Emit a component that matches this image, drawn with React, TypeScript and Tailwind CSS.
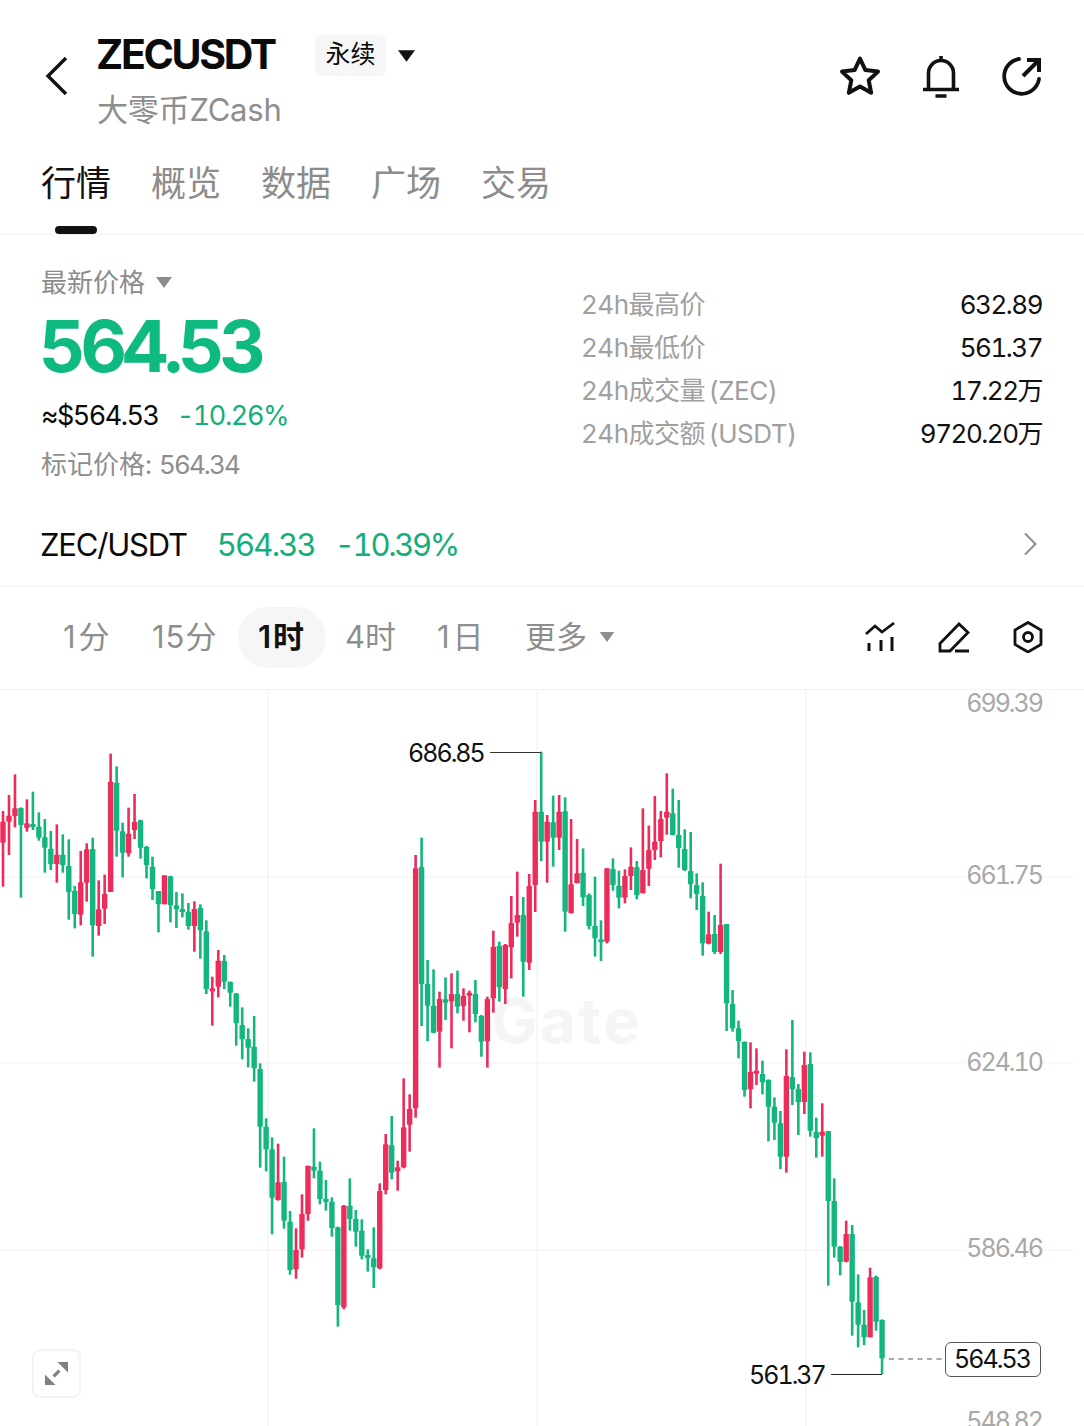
import React from "react";

type Raw = [string, number, number, number, number];

const GREEN = "#12b67e";
const RED = "#ee2c5c";

// values read at 3x, y0 is the top of each crop
const groups: { y0: number; rows: Raw[] }[] = [
  {
    y0: 740,
    rows: [
      ["R", 213, 245, 308, 440], ["R", 165, 227, 245, 345], ["R", 103, 205, 228, 262], ["G", 202, 204, 255, 473],
      ["R", 178, 250, 264, 275], ["G", 155, 252, 258, 270], ["G", 217, 260, 293, 302], ["G", 237, 292, 323, 398],
      ["G", 273, 326, 373, 390], ["R", 253, 344, 372, 428], ["G", 283, 344, 375, 398], ["G", 298, 378, 456, 539],
      ["G", 438, 452, 522, 565], ["R", 333, 427, 524, 556], ["R", 310, 328, 428, 485], ["G", 293, 327, 556, 650],
      ["R", 421, 508, 558, 587], ["R", 404, 462, 506, 552], ["R", 41, 125, 456, 456], ["G", 79, 128, 272, 350],
      ["G", 248, 274, 338, 412], ["R", 203, 281, 340, 350], ["R", 162, 246, 270, 297], ["G", 239, 241, 323, 356],
      ["G", 318, 320, 375, 415], ["G", 350, 380, 447, 480], ["G", 453, 453, 493, 577], ["R", 406, 406, 493, 493],
      ["G", 407, 409, 495, 547], ["G", 456, 496, 508, 564], ["G", 460, 507, 516, 532], ["G", 489, 515, 558, 569],
      ["R", 484, 507, 558, 635], ["G", 493, 504, 571, 656], ["G", 541, 574, 747, 762],
    ],
  },
  {
    y0: 960,
    rows: [
      ["R", 50, 85, 89, 197], ["R", -30, 2, 80, 112], ["G", -15, 3, 65, 87], ["G", 65, 65, 98, 140],
      ["G", 100, 100, 190, 257], ["G", 142, 195, 238, 298], ["G", 205, 237, 263, 322], ["G", 168, 260, 325, 365],
      ["G", 310, 327, 500, 623], ["G", 475, 500, 568, 634], ["G", 532, 568, 713, 823], ["R", 551, 667, 720, 722],
      ["G", 590, 666, 782, 806], ["G", 753, 785, 930, 944], ["R", 805, 870, 928, 956], ["R", 703, 762, 868, 893],
      ["R", 617, 617, 762, 782], ["G", 505, 620, 632, 655], ["G", 605, 632, 717, 733], ["G", 660, 716, 726, 752],
      ["G", 712, 725, 804, 830], ["G", 800, 802, 1035, 1100], ["R", 735, 737, 1042, 1048], ["G", 655, 737, 777, 812],
      ["G", 750, 777, 815, 860], ["G", 778, 812, 887, 898], ["G", 868, 885, 894, 935], ["G", 802, 895, 922, 984],
      ["R", 670, 693, 925, 928], ["R", 522, 553, 690, 703], ["G", 468, 556, 638, 658], ["R", 602, 622, 634, 692],
      ["R", 355, 502, 622, 625], ["R", 403, 447, 494, 575], ["R", -315, -275, 445, 473], ["G", -367, -279, 72, 198],
      ["G", 0, 72, 137, 243], ["G", 28, 137, 218, 220], ["R", 95, 117, 215, 323], ["G", 52, 118, 128, 180],
      ["R", 40, 102, 124, 265], ["G", 32, 102, 140, 160], ["R", 85, 108, 138, 182], ["R", 92, 98, 106, 217],
      ["G", 60, 102, 162, 187], ["G", 165, 167, 245, 290], ["R", 110, 117, 244, 323],
    ],
  },
  {
    y0: 930,
    rows: [
      ["R", 2, 50, 205, 248], ["G", 35, 48, 172, 215], ["R", 42, 45, 177, 222], ["R", -102, -21, 52, 145],
      ["R", -175, -45, -22, 20], ["G", -99, -45, 95, 200], ["R", -168, -132, 98, 120], ["R", -390, -355, -135, -54],
    ],
  },
  {
    y0: 740,
    rows: [
      ["G", 35, 215, 305, 363], ["R", 225, 245, 305, 428], ["G", 167, 247, 293, 380], ["R", 165, 215, 293, 330],
      ["G", 172, 214, 515, 575], ["R", 237, 433, 520, 520], ["R", 297, 400, 430, 430], ["G", 325, 398, 472, 498],
      ["G", 460, 465, 558, 568], ["G", 410, 558, 595, 650], ["G", 541, 598, 605, 663], ["R", 385, 385, 605, 610],
      ["G", 355, 387, 435, 452], ["G", 392, 437, 473, 505], ["R", 388, 408, 473, 490], ["R", 322, 380, 408, 450],
      ["G", 363, 382, 465, 478], ["R", 205, 390, 460, 460], ["R", 257, 330, 386, 438], ["R", 168, 305, 330, 360],
      ["R", 213, 237, 303, 352], ["R", 100, 215, 233, 284], ["G", 146, 220, 285, 286], ["G", 180, 285, 325, 383],
      ["G", 268, 327, 390, 393], ["G", 276, 393, 433, 475], ["G", 400, 435, 462, 510], ["G", 427, 467, 610, 647],
      ["R", 515, 583, 611, 613], ["G", 525, 582, 636, 642], ["R", 371, 555, 636, 642],
    ],
  },
  {
    y0: 960,
    rows: [["G", -108, -108, 130, 213], ["G", 90, 132, 205, 215]],
  },
  {
    y0: 1000,
    rows: [
      ["G", 62, 85, 123, 175], ["G", 125, 125, 270, 290], ["R", 127, 215, 268, 325], ["R", 145, 212, 218, 255],
      ["G", 182, 222, 247, 283], ["G", 238, 240, 320, 424], ["G", 292, 320, 368, 420], ["G", 333, 370, 470, 507],
      ["R", 148, 228, 470, 518], ["G", 60, 232, 268, 315], ["G", 252, 267, 306, 405], ["R", 155, 195, 306, 342],
      ["G", 157, 192, 392, 410], ["G", 353, 396, 414, 473], ["R", 310, 395, 407, 470], ["G", 393, 393, 603, 857],
      ["G", 535, 603, 740, 773], ["G", 738, 740, 786, 826], ["R", 662, 702, 785, 787], ["G", 675, 702, 905, 1007],
      ["G", 823, 907, 974, 1042], ["G", 930, 974, 1012, 1035], ["R", 803, 832, 1012, 1012], ["G", 827, 830, 965, 992],
      ["G", 958, 960, 1075, 1122],
    ],
  },
];

const candles = groups.flatMap((g) =>
  g.rows.map((r) => ({
    color: r[0] === "G" ? GREEN : RED,
    wickTop: g.y0 + r[1] / 3,
    top: g.y0 + r[2] / 3,
    bottom: g.y0 + r[3] / 3,
    wickBottom: g.y0 + r[4] / 3,
  }))
);

const latin = "font-['Inter','Noto_Sans_CJK_SC',sans-serif]";

function Triangle({ className }: { className: string }) {
  return (
    <svg viewBox="0 0 16 11" className={className}>
      <path d="M0 0h16L8 11z" fill="currentColor" />
    </svg>
  );
}

function Stat({ label, value }: { label: string; value: string }) {
  return (
    <div className="flex justify-between h-[43px] items-center">
      <span className="text-[#a0a0a0] ml-[-1px] tracking-[-0.5px] [word-spacing:-3px]">{label}</span>
      <span className="text-[#111] mr-[1px] tracking-[-1.5px]">{value}</span>
    </div>
  );
}

function Chart() {
  return (
    <svg viewBox="0 690 1084 736" className="absolute inset-0 w-full h-full">
      {[877, 1063, 1250].map((y) => (
        <line key={y} x1="0" x2="1074" y1={y} y2={y} stroke="#f6f6f6" strokeWidth="1.5" />
      ))}
      {[268, 537, 806].map((x) => (
        <line key={x} x1={x} x2={x} y1="690" y2="1426" stroke="#f4f4f4" strokeWidth="1.5" />
      ))}
      {candles.map((c, i) => {
        const x = 3 + i * 5.98;
        return (
          <g key={i} fill={c.color}>
            <rect x={x - 1.3} y={c.wickTop} width="2.6" height={c.wickBottom - c.wickTop} />
            <rect x={x - 2.7} y={c.top} width="5.4" height={Math.max(c.bottom - c.top, 3)} rx="0.6" />
          </g>
        );
      })}
      <line x1="490" x2="541" y1="752.5" y2="752.5" stroke="#333" strokeWidth="1.2" />
      <line x1="831" x2="882" y1="1374.5" y2="1374.5" stroke="#222" strokeWidth="1.2" />
      <line x1="889" x2="945" y1="1359" y2="1359" stroke="#555" strokeWidth="1.2" strokeDasharray="5 4.5" />
    </svg>
  );
}

function AxisLabel({ value, className }: { value: string; className: string }) {
  return (
    <span className={`absolute right-[42px] bg-white leading-[26px] text-[25px] tracking-[-2px] text-[#a8a8a8] ${className}`}>
      {value}
    </span>
  );
}

export default function App() {
  return (
    <div className={`${latin} tabular-nums relative w-[1084px] h-[1426px] overflow-hidden bg-white text-[#0a0a0a]`}>
      {/* header */}
      <header className="flex h-[146px] pl-[45px] pr-[41px]">
        <svg viewBox="0 0 24 40" className="mt-[56px] w-[24px] h-[40px] shrink-0">
          <path d="M21 2 3 20l18 18" fill="none" stroke="#111" strokeWidth="3.4" />
        </svg>
        <div className="ml-[28px] mt-[29px]">
          <div className="flex items-center h-[50px]">
            <h1 className="ml-[-1px] text-[41px] font-bold tracking-[-2.3px] leading-none">ZECUSDT</h1>
            <span className="ml-[40px] mt-[2px] w-[71px] h-[41px] rounded-md bg-[#f6f6f6] flex items-center justify-center text-[25px]">永续</span>
            <Triangle className="ml-[12px] mt-[4px] w-[17px] h-[12px] text-[#111]" />
          </div>
          <p className="mt-[11px] text-[31px] leading-[40px] tracking-[-0.2px] text-[#8e8e8e]">大零币ZCash</p>
        </div>
        <div className="ml-auto mt-[54px] flex items-start h-[46px]">
          <svg viewBox="0 0 44 44" className="w-[44px] h-[44px]">
            <path d="M22 4.5l5.4 11.6 12.6 1.5-9.3 8.7 2.5 12.5L22 32.5l-11.2 6.3 2.5-12.5L4 17.6l12.6-1.5z" fill="none" stroke="#111" strokeWidth="4" strokeLinejoin="round" />
          </svg>
          <svg viewBox="0 0 44 44" className="ml-[37px] w-[44px] h-[44px]">
            <path d="M9.500 35V19a12.500 12.500 0 0 1 25 0v16M4 35.500h36M16.500 42h11M22 2v4" fill="none" stroke="#111" strokeWidth="3.600" />
          </svg>
          <svg viewBox="0 0 44 44" className="ml-[36px] w-[44px] h-[44px]">
            <path d="M20 5a17.500 17.500 0 1 0 20 20" fill="none" stroke="#111" strokeWidth="3.800" strokeLinecap="round" />
            <path d="M24 22 38 8M28 6h12v12" fill="none" stroke="#111" strokeWidth="4" />
          </svg>
        </div>
      </header>

      {/* tabs */}
      <nav className="relative flex h-[89px] gap-[40px] pl-[41px] pt-[13px] border-b border-[#f1f1f1] text-[35px] leading-[48px] text-[#8c8c8c]">
        <span className="text-[#111]">行情</span>
        <span>概览</span>
        <span>数据</span>
        <span>广场</span>
        <span>交易</span>
        <div className="absolute left-[55px] bottom-0 w-[42px] h-[8px] rounded-full bg-[#111]" />
      </nav>

      {/* price */}
      <section className="flex h-[250px] pl-[41px] pr-[41px]">
        <div className="w-[541px] text-[26px]">
          <div className="flex items-center mt-[29px] h-[36px] text-[#8c8c8c]">
            最新价格
            <Triangle className="ml-[11px] w-[16px] h-[11px] text-[#8c8c8c]" />
          </div>
          <div className="mt-[10px] ml-[-2px] h-[72px] text-[72px] leading-[72px] font-bold tracking-[-5px] text-[#0fba80]">564.53</div>
          <div className="mt-[15px] flex items-center h-[38px]">
            <span className="text-[27px] tracking-[-1.5px]">≈$564.53</span>
            <span className="ml-[18px] text-[27px] tracking-[-1.4px] text-[#14ae7c]">-10.26%</span>
          </div>
          <div className="mt-[12px] h-[36px] leading-[36px] text-[#8e8e8e]">
            标记价格: <span className="tracking-[-1.9px]">564.34</span>
          </div>
        </div>
        <div className="flex-1 mt-[48px] text-[26px]">
          <Stat label="24h最高价" value="632.89" />
          <Stat label="24h最低价" value="561.37" />
          <Stat label="24h成交量 (ZEC)" value="17.22万" />
          <Stat label="24h成交额 (USDT)" value="9720.20万" />
        </div>
      </section>

      {/* spot row */}
      <div className="flex items-center h-[102px] pt-[20px] pl-[40px] pr-[47px] border-b border-[#f1f1f1] text-[31px]">
        <span className="tracking-[-1.2px]">ZEC/USDT</span>
        <span className="ml-[30px] text-[#14ae7c] tracking-[-1.8px]">564.33</span>
        <span className="ml-[20px] text-[#14ae7c] tracking-[-2.3px]">-10.39%</span>
        <svg viewBox="0 0 14 24" className="ml-auto mb-[4px] w-[14px] h-[24px]">
          <path d="M2 1.500 12.500 12 2 22.500" fill="none" stroke="#8c8c8c" strokeWidth="2" />
        </svg>
      </div>

      {/* period row */}
      <div className="flex items-center h-[103px] pb-[2px] pl-[63px] pr-[40px] border-b border-[#f1f1f1] text-[31px] text-[#8e8e8e] [font-variant-numeric:normal]">
        <span className="w-[89px] tracking-[3px]">1分</span>
        <span className="w-[86px] tracking-[1px]">15分</span>
        <span className="w-[88px] h-[61px] rounded-full bg-[#f6f6f6] flex items-center justify-center text-[#111] font-semibold tracking-[2px]">1时</span>
        <span className="ml-[19px] w-[92px]">4时</span>
        <span className="w-[88px] tracking-[3px]">1日</span>
        <span>更多</span>
        <Triangle className="ml-[12px] w-[16px] h-[10px] text-[#8e8e8e]" />
        <div className="ml-auto flex items-center gap-[42px]">
          <svg viewBox="0 0 32 32" className="w-[32px] h-[32px]">
            <path d="M2 13l9-8 7 6L30 2" fill="none" stroke="#111" strokeWidth="2.800" />
            <path d="M5 22v8M17 19v11M28 16v14" fill="none" stroke="#111" strokeWidth="3" />
          </svg>
          <svg viewBox="0 0 32 32" className="w-[32px] h-[32px]">
            <path d="M2 22.500 21 3l9 8.500L12 30H2zM17 30h14" fill="none" stroke="#111" strokeWidth="2.800" />
          </svg>
          <svg viewBox="0 0 32 32" className="w-[32px] h-[32px]">
            <path d="M16 1.500 29 9v14.500L16 31 3 23.500V9z" fill="none" stroke="#111" strokeWidth="2.800" />
            <circle cx="16" cy="16" r="4.500" fill="none" stroke="#111" strokeWidth="2.800" />
          </svg>
        </div>
      </div>

      {/* chart */}
      <div className="relative h-[736px] overflow-hidden">
        <span className="absolute left-[491px] top-[293px] text-[62px] font-bold leading-[76px] tracking-[2.5px] text-[#f5f5f5]">Gate</span>
        <Chart />
        <AxisLabel value="699.39" className="top-[0px]" />
        <AxisLabel value="661.75" className="top-[172px]" />
        <AxisLabel value="624.10" className="top-[359px]" />
        <AxisLabel value="586.46" className="top-[545px]" />
        <AxisLabel value="548.82" className="top-[718px]" />
        <span className="absolute left-[408px] top-[48px] text-[25px] leading-[30px] tracking-[-2px] text-[#111]">686.85</span>
        <span className="absolute left-[749px] top-[670px] text-[25px] leading-[30px] tracking-[-2px] text-[#111]">561.37</span>
        <span className="absolute left-[945px] top-[652px] w-[96px] h-[35px] pr-[2px] flex items-center justify-center rounded-md border border-[#555] bg-white text-[25px] tracking-[-2px] text-[#111]">564.53</span>
        <div className="absolute left-[32px] top-[659px] w-[49px] h-[49px] rounded-lg border-2 border-[#f3f3f3] bg-white flex items-center justify-center">
          <svg viewBox="0 0 26 26" className="w-[25px] h-[25px]">
            <path d="M14 1h11v11zM1 14l11 11H1z" fill="#808080" />
            <path d="M10 16 16 10" stroke="#808080" strokeWidth="3.500" />
          </svg>
        </div>
      </div>
    </div>
  );
}
